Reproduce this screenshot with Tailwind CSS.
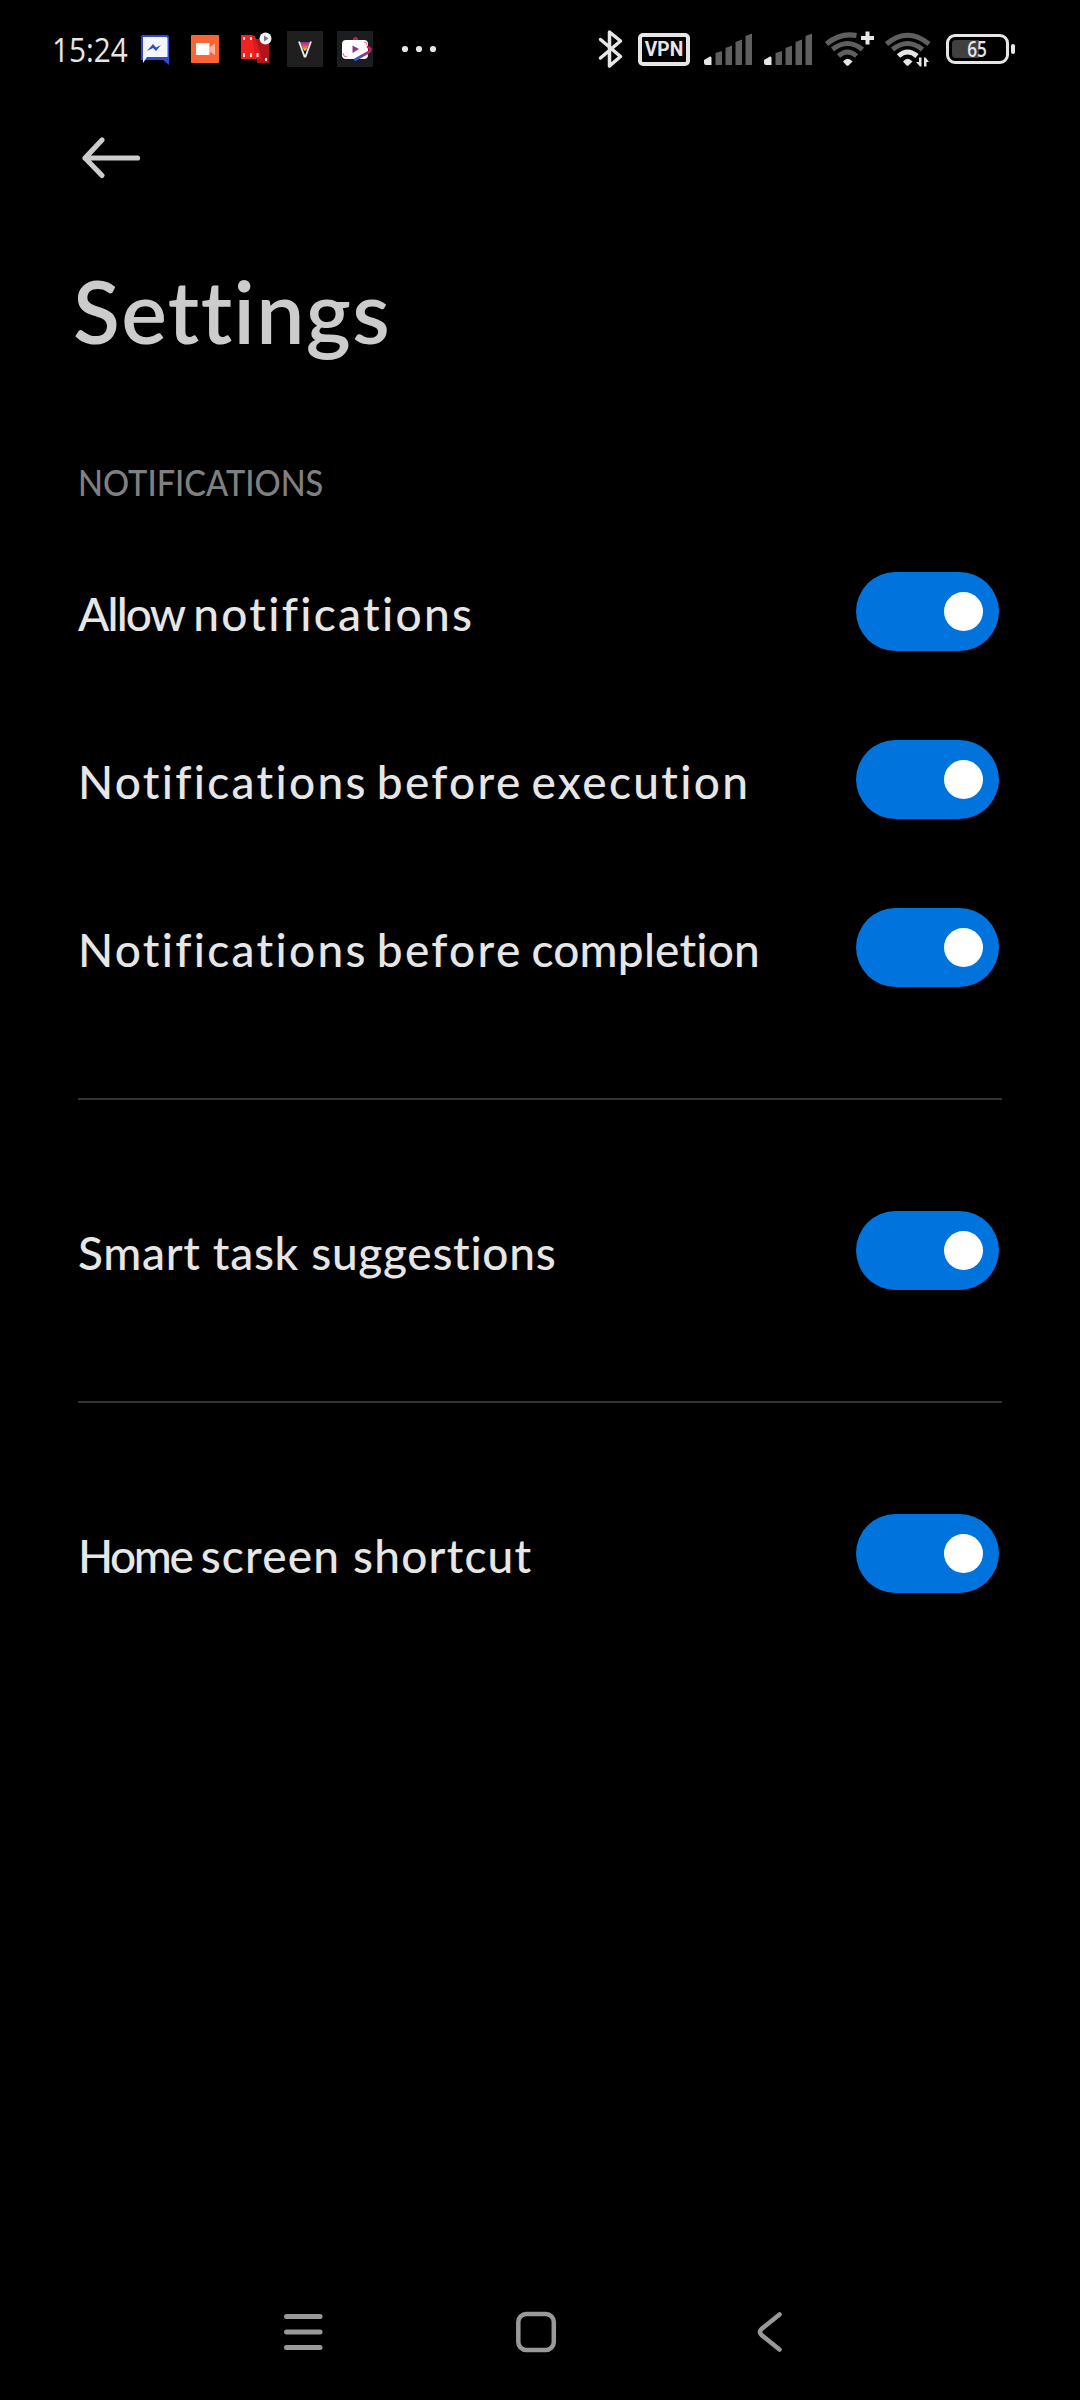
<!DOCTYPE html>
<html lang="en">
<head>
    <meta charset="UTF-8">
    <meta name="viewport" content="width=device-width, initial-scale=1.0">
    <title>Settings</title>
    <script src="https://cdn.jsdelivr.net/npm/@tailwindcss/browser@4"></script>
    <style>
        body {
            font-variant-ligatures: none;
        }
    </style>
</head>
<body class="bg-black font-['Lato',sans-serif]">
<div class="w-[1080px] h-[2400px] bg-black flex flex-col overflow-hidden">

    <!-- Status bar -->
    <header class="h-[98px] shrink-0 pl-[52px] pr-16 flex items-center justify-between">
        <div class="flex items-center">
            <span class="w-[89px] text-[33px] leading-10 font-medium text-[#e6e6e6] whitespace-nowrap pt-0.5 font-['Open_Sans',sans-serif]"><span class="inline-block origin-left scale-x-[0.9]">15:24</span></span>
            <svg class="w-7 h-10" viewBox="141 29 28 40">
                <path d="M143 35H167Q169 35 169 37V65L163 60H141V37Q141 35 143 35Z" fill="#3347cf"/>
                <path d="M143 37H166Q167.500 37 167.500 39V57H147L143 63Z" fill="#f4f5fa"/>
                <path d="M147 51L153 44L156 47.500L161 45L156 51L153 48Z" fill="#2c4bd8"/>
            </svg>
            <svg class="w-7 h-10 ml-[22px]" viewBox="191 29 28 40">
                <rect x="191" y="35" width="28" height="28" rx="1" fill="#fb6535"/>
                <rect x="196" y="43" width="13.500" height="12" rx="1" fill="#fff"/>
                <path d="M210 47L215 43.500V55L210 51.500Z" fill="#fdb49b"/>
            </svg>
            <svg class="w-8 h-10 ml-[22px]" viewBox="241 29 32 40">
                <path d="M255 39H269V63H257Z" fill="#b3141c"/>
                <path d="M241 35H252L261 58V59H241Z" fill="#f3211f"/>
                <path d="M252 35L255 36L262 59L256 59Z" fill="#d91b20"/>
                <g fill="#ffe5e0">
                    <rect x="243" y="37" width="2" height="3"/><rect x="250" y="37" width="2" height="3"/>
                    <rect x="243" y="53" width="2" height="4"/><rect x="250" y="53" width="2" height="4"/><rect x="256.500" y="53" width="2" height="4"/>
                    <rect x="265" y="58" width="2" height="3"/>
                </g>
                <circle cx="265.500" cy="38.500" r="6" fill="#f3f3f3"/>
                <path d="M264 35.500L268.500 38.500L264 41.500Z" fill="#777"/>
            </svg>
            <svg class="w-9 h-10 ml-3.5" viewBox="287 29 36 40">
                <defs>
                    <linearGradient id="vGrad" x1="0" y1="0" x2="0" y2="1">
                        <stop offset="0" stop-color="#a01fa0"/><stop offset="0.550" stop-color="#e0704a"/><stop offset="1" stop-color="#f5d742"/>
                    </linearGradient>
                </defs>
                <rect x="287" y="31" width="36" height="36" fill="#1f1f1f"/>
                <path d="M300 42H310L306 51H304Z" fill="url(#vGrad)"/>
                <path d="M302.500 49L305 51L307.500 49L305 54Z" fill="#111"/>
                <path d="M299 41.500L304.500 56.500H305.500L311 41.500" fill="none" stroke="#eee" stroke-width="1.800"/>
            </svg>
            <svg class="w-9 h-10 ml-3.5" viewBox="337 29 36 40">
                <defs>
                    <linearGradient id="ytGrad" x1="1" y1="0" x2="0" y2="1">
                        <stop offset="0" stop-color="#e01543"/><stop offset="1" stop-color="#2b5fe0"/>
                    </linearGradient>
                </defs>
                <rect x="337" y="31" width="36" height="36" fill="#1c1d20"/>
                <circle cx="355.500" cy="39.500" r="2.500" fill="#d01850"/>
                <rect x="342" y="40" width="26" height="19" rx="4" fill="#fff"/>
                <path d="M352.500 45.500L359 49L352.500 53Z" fill="#8c3590"/>
                <path d="M343 53Q343 57 347 57M364 42Q367 42 367 45" fill="none" stroke="#d9486a" stroke-width="0.800"/>
                <path d="M368 47L370.500 49Q370.500 51 369 52L355.500 59.500" fill="none" stroke="url(#ytGrad)" stroke-width="2.800" stroke-linejoin="round" stroke-linecap="round"/>
            </svg>
            <svg class="w-9 h-10 ml-7" viewBox="401 29 36 40" fill="#e6e6e6">
                <circle cx="405" cy="49" r="3.100"/><circle cx="419" cy="49" r="3.100"/><circle cx="433" cy="49" r="3.100"/>
            </svg>
        </div>

        <div class="flex items-center">
            <svg class="w-7 h-10" viewBox="597 29 28 40" fill="none" stroke="#e6e6e6" stroke-width="3.500" stroke-linejoin="round" stroke-linecap="round">
                <path d="M600.500 39.500L620.500 56.500L609.500 66V32L620.500 41L600.500 58"/>
            </svg>
            <div class="ml-[13px] w-[52px] h-[33px] border-4 border-[#e6e6e6] rounded-[5px] flex items-center justify-center text-[20px] leading-none font-bold text-[#e6e6e6] font-['Roboto',sans-serif]"><span class="scale-x-[0.96]">VPN</span></div>
            <svg class="w-12 h-10 ml-3.5" viewBox="704 29 48 40" fill="#5f5f5f">
                <path d="M704 60L710 56.500Q711.500 56 711.500 58V65H706Q704 65 704 63Z" fill="#e6e6e6"/>
                <path d="M715.500 53L722 51V65H715.500Z"/><path d="M725.500 48L732 45.500V65H725.500Z"/>
                <path d="M735.500 42L742 39.500V65H735.500Z"/><path d="M745.500 36L752 33.500V65H745.500Z"/>
            </svg>
            <svg class="w-12 h-10 ml-3" viewBox="704 29 48 40" fill="#5f5f5f">
                <path d="M704 60L710 56.500Q711.500 56 711.500 58V65H706Q704 65 704 63Z" fill="#e6e6e6"/>
                <path d="M715.500 53L722 51V65H715.500Z"/><path d="M725.500 48L732 45.500V65H725.500Z"/>
                <path d="M735.500 42L742 39.500V65H735.500Z"/><path d="M745.500 36L752 33.500V65H745.500Z"/>
            </svg>
            <svg class="w-[52px] h-10 ml-3" viewBox="824 29 52 40" fill="none" stroke="#5f5f5f" stroke-width="5">
                <path d="M826.500 44Q840 32.500 856.500 35.500"/>
                <path d="M832.500 49.500Q847.500 37.500 862.500 49.500"/>
                <path d="M838.500 56Q847.500 48 856.500 56"/>
                <path d="M843 61.500Q847.500 56 852.500 61.500L848.500 65.500Q847.500 66 846.500 65.500Z" fill="#e6e6e6" stroke="none"/>
                <path d="M867.500 31.500V44.500M861 38H874" stroke="#e6e6e6" stroke-width="4"/>
            </svg>
            <svg class="w-12 h-10 ml-2" viewBox="884 29 48 40" fill="none" stroke="#5f5f5f" stroke-width="5">
                <path d="M886.500 44Q907.500 26.500 929 44"/>
                <path d="M892.500 49.500Q907.500 37.500 922.500 49.500"/>
                <path d="M898.500 56Q907.500 48 917 56" stroke="#e6e6e6"/>
                <path d="M903 61.500Q907.500 56 912.500 61.500L908.500 65.500Q907.500 66 906.500 65.500Z" fill="#e6e6e6" stroke="none"/>
                <path d="M919 57.500H921.500V66.500H920L916 62H919ZM924 66.500V57.500H925.500L929 62H926.500V66.500Z" fill="#e6e6e6" stroke="none"/>
            </svg>
            <!-- Battery -->
            <div class="ml-3.5 flex items-center">
                <div class="w-[63px] h-[30px] border-[3px] border-[#e6e6e6] rounded-[9px] p-[3px] relative">
                    <div class="h-full w-[27px] rounded-l-[4px] bg-[#404040]"></div>
                    <span class="absolute inset-0 flex items-center justify-center text-[21px] leading-none font-semibold text-[#e6e6e6] font-['Open_Sans',sans-serif]"><span class="scale-x-[0.82]">65</span></span>
                </div>
                <div class="ml-0.5 mr-px w-1 h-2.5 rounded-sm bg-[#e6e6e6]"></div>
            </div>
        </div>
    </header>

    <!-- Back arrow -->
    <div class="h-[120px] pl-20 flex items-center">
        <svg class="w-16 h-12" viewBox="80 134 64 48" fill="none" stroke="#cccccc" stroke-width="5.200" stroke-linecap="round" stroke-linejoin="round">
            <path d="M102 140L85 158L102 175.500M85 158H137.500"/>
        </svg>
    </div>

    <h1 class="h-[188px] pl-[73px] pt-[29px] leading-[128px] text-[86px] text-[#cccccc] font-semibold tracking-[1.4px] whitespace-nowrap">Settings</h1>

    <main class="px-[78px] pt-[52px]">
        <h2 class="h-[70px] text-[36px] leading-[49px] font-medium text-[#808080] whitespace-nowrap"><span class="inline-block origin-left scale-x-[0.905]">NOTIFICATIONS</span></h2>

        <section class="pb-[66px] border-b-2 border-[#333333]">
            <div class="h-[168px] pr-[3px] flex items-center justify-between">
                <span class="pt-1 text-[46px] leading-[60px] font-medium tracking-[2.3px] text-[#e6e6e6] whitespace-nowrap"><span class="tracking-[-1.8px]">Allow </span>notifications</span>
                <div class="w-[143px] h-[79px] mb-px rounded-full bg-[#0073dd] flex items-center justify-end pr-4"><div class="size-[39px] rounded-full bg-white"></div></div>
            </div>
            <div class="h-[168px] pr-[3px] flex items-center justify-between">
                <span class="pt-1 text-[46px] leading-[60px] font-medium tracking-[2.3px] [word-spacing:-5px] text-[#e6e6e6] whitespace-nowrap">Notifications before execution</span>
                <div class="w-[143px] h-[79px] mb-px rounded-full bg-[#0073dd] flex items-center justify-end pr-4"><div class="size-[39px] rounded-full bg-white"></div></div>
            </div>
            <div class="h-[168px] pr-[3px] flex items-center justify-between">
                <span class="pt-1 text-[46px] leading-[60px] font-medium tracking-[2.3px] [word-spacing:-5px] text-[#e6e6e6] whitespace-nowrap">Notifications before <span class="tracking-[0.2px]">completion</span></span>
                <div class="w-[143px] h-[79px] mb-px rounded-full bg-[#0073dd] flex items-center justify-end pr-4"><div class="size-[39px] rounded-full bg-white"></div></div>
            </div>
        </section>

        <section class="pt-[67px] pb-[66px] border-b-2 border-[#333333]">
            <div class="h-[168px] pr-[3px] flex items-center justify-between">
                <span class="pt-1 text-[46px] leading-[60px] font-medium tracking-[0.7px] text-[#e6e6e6] whitespace-nowrap">Smart task suggestions</span>
                <div class="w-[143px] h-[79px] mb-px rounded-full bg-[#0073dd] flex items-center justify-end pr-4"><div class="size-[39px] rounded-full bg-white"></div></div>
            </div>
        </section>

        <section class="pt-[67px]">
            <div class="h-[168px] pr-[3px] flex items-center justify-between">
                <span class="pt-1 text-[46px] leading-[60px] font-medium tracking-[1.2px] text-[#e6e6e6] whitespace-nowrap"><span class="tracking-[-2.4px]">Home </span>screen shortcut</span>
                <div class="w-[143px] h-[79px] mb-px rounded-full bg-[#0073dd] flex items-center justify-end pr-4"><div class="size-[39px] rounded-full bg-white"></div></div>
            </div>
        </section>
    </main>

    <!-- Navigation bar -->
    <nav class="mt-auto h-[136px] pl-[280px] flex items-center">
        <svg class="w-[46px] h-12" viewBox="280 2308 46 48" stroke="#999999" stroke-width="5" stroke-linecap="round">
            <path d="M286.500 2316.500H320M286.500 2332H320M286.500 2347.500H320"/>
        </svg>
        <svg class="w-12 h-12 ml-[186px]" viewBox="512 2308 48 48" fill="none" stroke="#999999" stroke-width="4.500">
            <rect x="518.300" y="2314" width="35.500" height="36" rx="8"/>
        </svg>
        <svg class="w-9 h-12 ml-[194px]" viewBox="754 2308 36 48" fill="none" stroke="#999999" stroke-width="4.500" stroke-linecap="round">
            <path d="M779.500 2314.500L761.500 2329Q758.500 2332 761.500 2335L779.500 2349.500"/>
        </svg>
    </nav>
</div>
</body>
</html>
